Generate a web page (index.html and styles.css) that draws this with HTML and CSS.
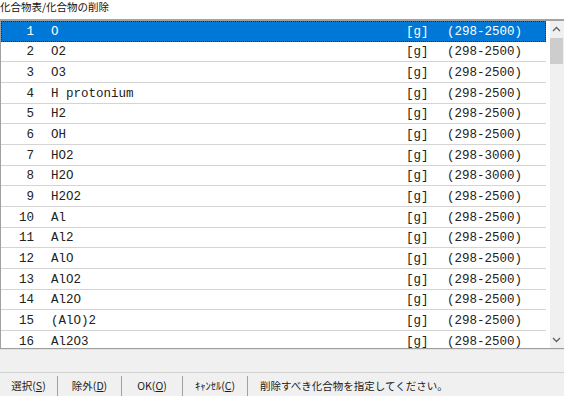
FILE: index.html
```html
<!DOCTYPE html>
<html lang="ja">
<head>
<meta charset="utf-8">
<title>化合物表/化合物の削除</title>
<link rel="stylesheet" href="styles.css">
</head>
<body>
<div class="window">
  <div class="title">化合物表/化合物の削除</div>
  <div class="listbox">
    <div class="rows">
      <div class="row selected"><span class="num">1</span><span class="name">O</span><span class="unit">[g]</span><span class="range">(298-2500)</span></div>
      <div class="row"><span class="num">2</span><span class="name">O2</span><span class="unit">[g]</span><span class="range">(298-2500)</span></div>
      <div class="row"><span class="num">3</span><span class="name">O3</span><span class="unit">[g]</span><span class="range">(298-2500)</span></div>
      <div class="row"><span class="num">4</span><span class="name">H protonium</span><span class="unit">[g]</span><span class="range">(298-2500)</span></div>
      <div class="row"><span class="num">5</span><span class="name">H2</span><span class="unit">[g]</span><span class="range">(298-2500)</span></div>
      <div class="row"><span class="num">6</span><span class="name">OH</span><span class="unit">[g]</span><span class="range">(298-2500)</span></div>
      <div class="row"><span class="num">7</span><span class="name">HO2</span><span class="unit">[g]</span><span class="range">(298-3000)</span></div>
      <div class="row"><span class="num">8</span><span class="name">H2O</span><span class="unit">[g]</span><span class="range">(298-3000)</span></div>
      <div class="row"><span class="num">9</span><span class="name">H2O2</span><span class="unit">[g]</span><span class="range">(298-2500)</span></div>
      <div class="row"><span class="num">10</span><span class="name">Al</span><span class="unit">[g]</span><span class="range">(298-2500)</span></div>
      <div class="row"><span class="num">11</span><span class="name">Al2</span><span class="unit">[g]</span><span class="range">(298-2500)</span></div>
      <div class="row"><span class="num">12</span><span class="name">AlO</span><span class="unit">[g]</span><span class="range">(298-2500)</span></div>
      <div class="row"><span class="num">13</span><span class="name">AlO2</span><span class="unit">[g]</span><span class="range">(298-2500)</span></div>
      <div class="row"><span class="num">14</span><span class="name">Al2O</span><span class="unit">[g]</span><span class="range">(298-2500)</span></div>
      <div class="row"><span class="num">15</span><span class="name">(AlO)2</span><span class="unit">[g]</span><span class="range">(298-2500)</span></div>
      <div class="row"><span class="num">16</span><span class="name">Al2O3</span><span class="unit">[g]</span><span class="range">(298-2500)</span></div>
    </div>
    <div class="scrollbar">
      <div class="sb-btn">
        <svg width="9" height="6" viewBox="0 0 9 6"><path d="M1 5 L4.5 1.5 L8 5" fill="none" stroke="#606060" stroke-width="1.3"/></svg>
      </div>
      <div class="sb-track"><div class="sb-thumb"></div></div>
      <div class="sb-btn">
        <svg width="9" height="6" viewBox="0 0 9 6"><path d="M1 1 L4.5 4.5 L8 1" fill="none" stroke="#606060" stroke-width="1.3"/></svg>
      </div>
    </div>
  </div>
  <div class="band"></div>
  <div class="statusbar">
    <div class="btn b1">選択(<u>S</u>)</div>
    <div class="btn b2">除外(<u>D</u>)</div>
    <div class="btn b3">OK(<u>O</u>)</div>
    <div class="btn b4">ｷｬﾝｾﾙ(<u>C</u>)</div>
    <div class="msg">削除すべき化合物を指定してください。</div>
  </div>
</div>
</body>
</html>
```
FILE: styles.css
```css
html, body {
  margin: 0;
  padding: 0;
  background: #ffffff;
}
.window {
  width: 564px;
  height: 396px;
  display: flex;
  flex-direction: column;
  overflow: hidden;
  font-family: "Noto Sans CJK JP", "Noto Sans", sans-serif;
}
.title {
  height: 19px;
  font-size: 10.5px;
  line-height: 13px;
  color: #111111;
  box-sizing: border-box;
}
.listbox {
  height: 330px;
  box-sizing: border-box;
  border-top: 2px solid #a3a3a3;
  border-left: 1px solid #a0a0a0;
  border-bottom: 1px solid #9d9d9d;
  box-shadow: 0 1px 0 #e2e2e2;
  display: flex;
  background: #ffffff;
  margin-bottom: 1px;
}
.rows {
  width: 545px;
  overflow: hidden;
  flex: none;
}
.row {
  height: 20.67px;
  box-sizing: border-box;
  border-bottom: 1px solid #d4d4d4;
  padding-top: 2px;
  display: grid;
  grid-template-columns: 33px 372px 41px 1fr;
  align-items: center;
  font-family: "Liberation Mono", monospace;
  font-size: 12.5px;
  color: #222222;
  white-space: pre;
}
.row.selected {
  background: #0078d7;
  color: #ffffff;
  outline: 1px dotted #1b2b55;
  outline-offset: -1px;
  border-bottom-color: #0078d7;
}
.num {
  text-align: right;
}
.name {
  padding-left: 17px;
}
.scrollbar {
  margin-left: 4px;
  width: 14px;
  background: #f0f0f0;
  display: flex;
  flex-direction: column;
}
.sb-btn {
  height: 16px;
  display: flex;
  align-items: center;
  justify-content: center;
  padding-right: 1px;
}
.sb-track {
  flex: 1;
  padding-top: 1px;
}
.sb-thumb {
  height: 26px;
  width: 13px;
  background: #cdcdcd;
}
.band {
  height: 22px;
  background: #f0f0f0;
  border-bottom: 1px solid #d2d2d2;
}
.statusbar {
  flex: 1;
  background: #f0f0f0;
  display: flex;
  align-items: stretch;
  font-size: 10.5px;
  color: #1a1a1a;
  padding-top: 3px;
}
.btn {
  display: flex;
  align-items: center;
  justify-content: center;
  border-right: 1px solid #a0a0a0;
  box-sizing: border-box;
  padding-bottom: 2px;
}
.b1 { width: 58px; }
.b2 { width: 64px; }
.b3 { width: 61px; }
.b4 { width: 65px; }
.btn u {
  text-underline-offset: 1px;
}
.msg {
  padding-left: 12px;
  display: flex;
  align-items: center;
  padding-bottom: 2px;
}
```
